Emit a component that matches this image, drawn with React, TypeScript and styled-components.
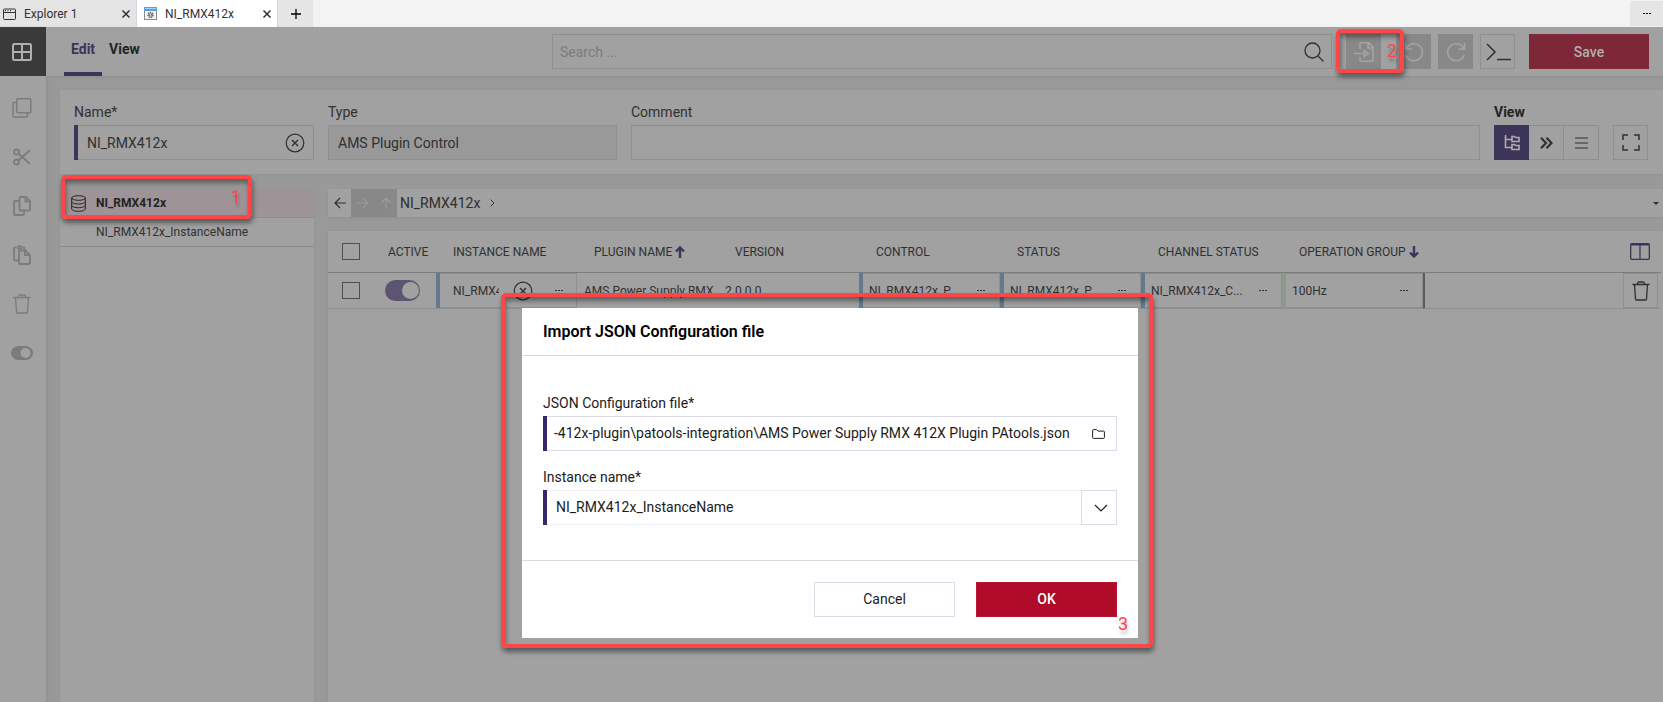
import React, { ReactNode } from "react";
import styled, { createGlobalStyle, css } from "styled-components";

const c = {
  panel: "#a1a1a1",
  gap: "#999999",
  line: "#8e8e93",
  text: "#303030",
  strong: "#232323",
  muted: "#7c7c7c",
  disabled: "#888888",
  disabledIcon: "#a4a4a4",
  purple: "#3d3459",
  accent: "#35286a",
  mark: "#ff4545",
};

const Global = createGlobalStyle`
  *, *::before, *::after { box-sizing: border-box; }
  body { margin: 0; background: ${c.gap}; color: ${c.text}; font: 14px/20px Roboto, "Liberation Sans", sans-serif; }
  button, input, select { font: inherit; color: inherit; margin: 0; border-radius: 0; outline: 0; }
  button { padding: 0; background: none; border: 0; cursor: pointer; }
`;

/* ---------- icons ---------- */

const Glyph = styled.svg<{ $w?: number }>`
  display: block;
  flex: none;
  fill: none;
  stroke: currentColor;
  stroke-width: ${(p) => p.$w ?? 1};
`;

type IconProps = { w: number; h?: number; sw?: number; children: ReactNode };
const Icon = ({ w, h = w, sw, children }: IconProps) => (
  <Glyph $w={sw} width={w} height={h} viewBox={`0 0 ${w} ${h}`} aria-hidden="true">
    {children}
  </Glyph>
);

const WindowIcon = () => (
  <Icon w={13} h={12}>
    <rect x=".5" y="1" width="12" height="10.5" rx="1" />
    <path d="M.5 4.5h12" />
    <path d="M2 2.7h1M4.500 2.700h1M7 2.700h1" strokeWidth="1.200" />
  </Icon>
);
const PluginIcon = () => (
  <Icon w={13} h={13}>
    <rect x=".5" y=".5" width="12" height="12" fill="#f4f4f4" stroke="#8a8a8a" />
    <path d="M0 2h13" stroke="#5aa0dc" strokeWidth="4" />
    <path d="M1 1.500h11" stroke="#a9cdec" />
    <circle cx="6.500" cy="8" r="2.400" stroke="#666" strokeWidth="1.600" strokeDasharray="1.300 .6" />
    <circle cx="6.500" cy="8" r="1.200" stroke="#777" />
  </Icon>
);
const CloseIcon = () => (
  <Icon w={8} sw={1.5}>
    <path d="M.5.5l7 7M7.500.5l-7 7" />
  </Icon>
);
const PlusIcon = () => (
  <Icon w={10} sw={1.3}>
    <path d="M5 0v10M0 5h10" />
  </Icon>
);
const DotsIcon = () => (
  <Icon w={8} h={1}>
    <path d="M0 .5h2M3 .5h2M6 .5h2" />
  </Icon>
);
const GridIcon = () => (
  <Icon w={20} h={18} sw={2}>
    <rect x="1" y="1" width="18" height="16" rx="1.500" />
    <path d="M10 1v16M1 9h18" />
  </Icon>
);
const LayersIcon = () => (
  <Icon w={20} sw={1.5}>
    <rect x="4.750" y=".75" width="14" height="14" rx="1" />
    <path d="M4.500 4.500H2a1 1 0 0 0-1 1V18a1 1 0 0 0 1 1h12.500a1 1 0 0 0 1-1v-3" />
  </Icon>
);
const CutIcon = () => (
  <Icon w={18} sw={1.8}>
    <circle cx="3.500" cy="4" r="2.500" />
    <circle cx="3.500" cy="14" r="2.500" />
    <path d="M5.500 5.500L17 16M5.500 12.500L17 2" />
  </Icon>
);
const CopyIcon = () => (
  <Icon w={18} h={20} sw={1.8}>
    <path d="M7.500 1h5.500l4 4v8.500a1 1 0 0 1-1 1H7.500a1 1 0 0 1-1-1V2a1 1 0 0 1 1-1z" />
    <path d="M12.500 1v4.500H17M6.500 5H2a1 1 0 0 0-1 1v12a1 1 0 0 0 1 1h8a1 1 0 0 0 1-1v-3" />
  </Icon>
);
const PasteIcon = () => (
  <Icon w={18} h={20} sw={1.8}>
    <path d="M7 5.500h5.500l4.500 4.500v8a1 1 0 0 1-1 1H7a1 1 0 0 1-1-1V6.500a1 1 0 0 1 1-1z" />
    <path d="M12 5.500V10h5M6 15.500H2a1 1 0 0 1-1-1V3.500a1 1 0 0 1 1-1h1.500M11.500 5V3.500a1 1 0 0 0-1-1H9.500" />
    <circle cx="6.500" cy="2.500" r="1.600" />
  </Icon>
);
const TrashIcon = () => (
  <Icon w={18} h={20} sw={1.3}>
    <path d="M.5 3.500h17M2.500 3.500l1 14.500a1 1 0 0 0 1 1h9a1 1 0 0 0 1-1l1-14.500M5.500 3.500V2.500a1.500 1.500 0 0 1 1.500-1.500h4a1.500 1.500 0 0 1 1.500 1.500v1" />
  </Icon>
);
const ToggleIcon = () => (
  <Icon w={22} h={14}>
    <rect x=".5" y=".5" width="21" height="13" rx="6.500" fill="currentColor" />
    <circle cx="14.500" cy="7" r="5" fill={c.panel} stroke="none" />
  </Icon>
);
const SearchIcon = () => (
  <Icon w={20} sw={1.3}>
    <circle cx="8.500" cy="8.500" r="7.500" />
    <path d="M14 14l5.500 5.500" />
  </Icon>
);
const ImportIcon = () => (
  <Icon w={20} sw={1.6}>
    <path d="M6 7V1.700a1 1 0 0 1 1-1h7.500l4.500 4.500v13a1 1 0 0 1-1 1H7a1 1 0 0 1-1-1V15M14 1v5h5M0 11.500h10" />
    <path d="M10 8.500l4.500 3-4.500 3z" />
  </Icon>
);
const UndoIcon = () => (
  <Icon w={20} sw={1.6}>
    <path d="M1.500 1v6h6M2 7a8.500 8.500 0 1 1-.2 6" />
  </Icon>
);
const RedoIcon = () => (
  <Icon w={20} sw={1.6}>
    <path d="M18.500 1v6h-6M18 7a8.500 8.500 0 1 0 .2 6" />
  </Icon>
);
const ConsoleIcon = () => (
  <Icon w={26} h={18} sw={1.5}>
    <path d="M2 1l8 8-8 8M12 16.500h14" />
  </Icon>
);
const ClearIcon = () => (
  <Icon w={20} sw={1.2}>
    <circle cx="10" cy="10" r="8.800" />
    <path d="M7 7l6 6M13 7l-6 6" strokeWidth="1.400" />
  </Icon>
);
const TreeIcon = () => (
  <Icon w={16} sw={1.6}>
    <path d="M1.500 0v12.500H8M1.500 4.500H8" />
    <path d="M8 1.500h2.500l1 1H15v4H8zM8 9.500h2.500l1 1H15v4H8z" />
  </Icon>
);
const ChevronsIcon = () => (
  <Icon w={13} h={12} sw={2.2}>
    <path d="M1 .8L6 6l-5 5.200M6.500.8L11.500 6l-5 5.200" />
  </Icon>
);
const LinesIcon = () => (
  <Icon w={13} h={12} sw={1.2}>
    <path d="M0 1h13M0 6h13M0 11h13" />
  </Icon>
);
const ExpandIcon = () => (
  <Icon w={18} h={17} sw={1.5}>
    <path d="M1 6V1h5M12 1h5v5M17 11v5h-5M6 16H1v-5" />
  </Icon>
);
const DatabaseIcon = () => (
  <Icon w={15} h={17}>
    <ellipse cx="7.500" cy="3" rx="6.800" ry="2.300" />
    <path d="M.7 3v11c0 1.200 3 2.300 6.800 2.300s6.800-1.100 6.800-2.300V3M.7 6.700C.7 7.900 3.700 9 7.500 9s6.800-1.100 6.800-2.300M.7 10.400c0 1.200 3 2.300 6.800 2.300s6.800-1.100 6.800-2.300" />
  </Icon>
);
const ArrowIcon = ({ d }: { d: "left" | "right" | "up" }) => (
  <Icon w={12} sw={1.2}>
    {d === "left" && <path d="M12 6H1M6 1L1 6l5 5" />}
    {d === "right" && <path d="M0 6h11M6 1l5 5-5 5" />}
    {d === "up" && <path d="M6 12V1M1 6l5-5 5 5" />}
  </Icon>
);
const CrumbIcon = () => (
  <Icon w={5} h={8}>
    <path d="M.7.7L4 4 .7 7.300" />
  </Icon>
);
const CaretIcon = () => (
  <Icon w={6} h={3}>
    <path d="M0 0h6L3 3z" fill="currentColor" stroke="none" />
  </Icon>
);
const SortIcon = ({ down }: { down?: boolean }) => (
  <Icon w={10} h={12} sw={2.4}>
    {down ? <path d="M5 0v10.500M1 6.500l4 4 4-4" /> : <path d="M5 12V1.500M1 5.500l4-4 4 4" />}
  </Icon>
);
const ColumnsIcon = () => (
  <Icon w={20} h={17} sw={1.3}>
    <rect x=".7" y=".7" width="18.600" height="15.600" rx="1" />
    <path d="M10 1v15" />
    <path d="M1 1.500h18" strokeWidth="2" />
  </Icon>
);
const FolderIcon = () => (
  <Icon w={13} h={10}>
    <path d="M.6 8.500v-7a.9.9 0 0 1 .9-.9h3l1.500 1.500h5.500a.9.9 0 0 1 .9.900v5.500a.9.9 0 0 1-.9.900h-10a.9.9 0 0 1-.9-.9z" />
  </Icon>
);
const ChevronDownIcon = () => (
  <Icon w={14} h={8} sw={1.2}>
    <path d="M1 1l6 6 6-6" />
  </Icon>
);

/* ---------- frame ---------- */

const Page = styled.div`
  position: relative;
  display: flex;
  flex-direction: column;
  min-height: 100vh;
`;
const TabStrip = styled.div`
  display: flex;
  height: 27px;
  background: #f3f3f3;
  color: #333;
  font-size: 12px;
`;
const Tab = styled.div<{ $active?: boolean }>`
  display: flex;
  align-items: center;
  gap: 8px;
  width: ${(p) => (p.$active ? 141 : 137)}px;
  padding: 0 6px 0 ${(p) => (p.$active ? 7 : 3)}px;
  background: ${(p) => (p.$active ? "#fff" : "#e4e4e4")};
  border-right: 1px solid #d5d5e2;
`;
const TabTitle = styled.span`
  flex: 1;
`;
const SmallButton = styled.button<{ $w: number }>`
  display: grid;
  place-items: center;
  width: ${(p) => p.$w}px;
`;
const StripButton = styled(SmallButton)<{ $end?: boolean }>`
  background: #e5e5e5;
  color: #000;
  ${(p) => p.$end && css`margin: 1px 0 1px auto;`}
`;
const Body = styled.div`
  flex: 1;
  display: grid;
  grid-template-columns: 46px minmax(0, 1fr);
`;
const Rail = styled.aside`
  background: ${c.panel};
  box-shadow: 1px 0 3px rgba(0, 0, 0, 0.08);
`;
const RailButton = styled.button<{ $home?: boolean }>`
  display: grid;
  place-items: center;
  width: 100%;
  height: 49px;
  padding-right: 2px;
  color: ${c.muted};
  ${(p) =>
    p.$home &&
    css`
      margin-bottom: 7px;
      background: #3a3a3a;
      color: #b0b0b0;
    `}
`;
const Workspace = styled.main`
  display: flex;
  flex-direction: column;
`;
const Toolbar = styled.header`
  display: flex;
  align-items: center;
  height: 49px;
  padding-right: 14px;
  background: ${c.panel};
  box-shadow: 0 1px 3px rgba(0, 0, 0, 0.08);
`;
const Nav = styled.nav`
  display: flex;
  flex: 0 1 506px;
  align-self: stretch;
  padding-left: 18px;
`;
const NavLink = styled.a<{ $active?: boolean }>`
  padding: 12px 7px 0;
  border-bottom: 4px solid ${(p) => (p.$active ? c.purple : "transparent")};
  color: ${(p) => (p.$active ? c.purple : c.strong)};
  font-weight: 700;
  text-decoration: none;
`;
const SearchBox = styled.label`
  display: flex;
  align-items: center;
  flex: 1;
  height: 35px;
  padding: 0 7px;
  border: 1px solid ${c.line};
`;
const PlainInput = styled.input`
  flex: 1;
  width: 100%;
  min-width: 0;
  padding: 0;
  border: 0;
  background: none;
  &::placeholder { color: ${c.muted}; opacity: 1; }
`;
const Actions = styled.div`
  display: flex;
  gap: 7px;
  margin-left: 14px;
`;
const SquareButton = styled.button<{ $look?: "off" | "on" }>`
  display: grid;
  place-items: center;
  width: 35px;
  height: 35px;
  border: 1px solid ${c.line};
  ${(p) => p.$look === "off" && css`border-color: ${c.disabled}; background: ${c.disabled}; color: ${c.disabledIcon};`}
  ${(p) => p.$look === "on" && css`border-color: ${c.purple}; background: ${c.purple}; color: #adadad;`}
`;
const ImportSlot = styled.div`
  position: relative;
  margin-right: 8px;
`;
const SaveButton = styled.button`
  width: 120px;
  height: 35px;
  margin-left: 7px;
  background: #7d2738;
  color: #b0b0b0;
  font-weight: 500;
`;

/* ---------- form row ---------- */

const Content = styled.div`
  flex: 1;
  display: flex;
  flex-direction: column;
  gap: 15px;
  padding: 14px 0 0 14px;
`;
const panel = css`
  background: ${c.panel};
  box-shadow: 0 1px 3px rgba(0, 0, 0, 0.06);
`;
const FormPanel = styled.section`
  ${panel}
  display: flex;
  gap: 14px;
  padding: 12px 14px 14px;
`;
const Field = styled.div<{ $w?: number }>`
  display: flex;
  flex-direction: column;
  gap: 3px;
  flex: ${(p) => (p.$w ? `0 0 ${p.$w}px` : "1")};
`;
const Caption = styled.label`
  line-height: 20px;
`;
const ViewCaption = styled.span`
  color: ${c.strong};
  font-weight: 700;
`;
/* Coloured square-ended bar on the left of a box, in place of its left border. */
const bar = (color: string) => css`
  margin-left: 4px;
  border-left: 0;
  box-shadow: -4px 0 0 ${color};
`;
const Control = styled.div<{ $required?: boolean; $readOnly?: boolean }>`
  display: flex;
  align-items: center;
  height: 35px;
  padding: 0 8px 0 9px;
  border: 1px solid ${c.line};
  ${(p) => p.$required && bar(c.purple)}
  ${(p) => p.$readOnly && css`background: #999999;`}
`;
const Segments = styled.div`
  display: flex;
  & > button + button { border-left: 0; }
`;
const ViewTools = styled.div`
  display: flex;
  gap: 14px;
`;

/* ---------- tree ---------- */

const Lower = styled.div`
  flex: 1;
  display: grid;
  grid-template-columns: 254px minmax(0, 1fr);
  gap: 14px;
`;
const Tree = styled.ul`
  ${panel}
  position: relative;
  margin: 0;
  padding: 0;
  list-style: none;
  font-size: 12px;
`;
const TreeRow = styled.li<{ $selected?: boolean }>`
  display: flex;
  align-items: center;
  height: 29px;
  padding-left: 11px;
  border-bottom: 1px solid #8c8c8c;
  ${(p) => p.$selected && css`background: #9e9396; border-color: #95898c; color: ${c.strong}; font-weight: 700;`}
`;
const TreeIconSlot = styled.span`
  width: 25px;
`;

/* ---------- breadcrumb and table ---------- */

const Right = styled.div`
  display: flex;
  flex-direction: column;
  gap: 14px;
`;
const Crumbs = styled.div`
  ${panel}
  display: flex;
  align-items: center;
  height: 28px;
  padding-right: 4px;
`;
const CrumbButton = styled.button<{ $off?: boolean }>`
  display: grid;
  place-items: center;
  width: 23px;
  height: 28px;
  ${(p) => p.$off && css`background: ${c.disabled}; color: #9b9b9b;`}
`;
const CrumbText = styled.span`
  margin: 0 10px 0 3px;
`;
const CaretButton = styled.button`
  margin-left: auto;
`;
const TablePanel = styled.section`
  ${panel}
  flex: 1;
  padding-right: 2px;
`;
const Table = styled.table`
  width: 100%;
  table-layout: fixed;
  border-collapse: separate;
  border-spacing: 0;
  font-size: 12px;
`;
const Col = styled.col<{ $w?: number }>`
  width: ${(p) => (p.$w ? `${p.$w}px` : "auto")};
`;
const Th = styled.th<{ $pad?: number }>`
  height: 42px;
  padding: 0 0 0 ${(p) => p.$pad ?? 17}px;
  border-bottom: 1px solid #7c7c7c;
  font-weight: 400;
  text-align: left;
  white-space: nowrap;
`;
const HeadLabel = styled.span`
  display: flex;
  align-items: center;
  gap: 3px;
`;
const HeadTool = styled.button`
  display: block;
  margin-left: 7px;
  color: ${c.purple};
`;
const SortMark = styled.span`
  color: ${c.purple};
`;
const Td = styled.td<{ $pad?: number }>`
  height: 36px;
  padding: 0 0 0 ${(p) => p.$pad ?? 0}px;
  border-bottom: 1px solid ${c.line};
  white-space: nowrap;
  overflow: hidden;
`;
const EndTd = styled(Td)`
  border-left: 2px solid #5c5c5c;
`;
const CellBox = styled.div<{ $bar: string }>`
  display: flex;
  align-items: center;
  gap: 8px;
  height: 35px;
  padding: 0 14px 0 6px;
  border: 1px solid ${c.line};
  ${(p) => bar(p.$bar)}
`;
const NameBox = styled(CellBox)`
  gap: 14px;
  padding: 0 6px 0 13px;
`;
const Check = styled.input`
  appearance: none;
  display: block;
  width: 18px;
  height: 17px;
  border: 1px solid #4e4e4e;
`;
const Switch = styled.input`
  appearance: none;
  display: block;
  width: 35px;
  height: 21px;
  border-radius: 11px;
  background: #5c5470;
  &::after {
    content: "";
    display: block;
    width: 17px;
    height: 17px;
    margin: 2px 0 0 17px;
    border-radius: 50%;
    background: ${c.panel};
  }
`;
const DeleteButton = styled.button`
  display: grid;
  place-items: center;
  width: 35px;
  height: 35px;
  border: 1px solid ${c.line};
`;

/* ---------- dialog ---------- */

const DialogLayer = styled.div`
  position: absolute;
  inset: 0;
  display: flex;
  justify-content: center;
  align-items: flex-start;
  padding: 308px 3px 0 0;
`;
const Dialog = styled.div`
  position: relative;
  width: 616px;
  background: #fff;
  color: #1c1c1c;
`;
const DialogTitle = styled.h2`
  margin: 0;
  padding: 14px 21px 13px;
  border-bottom: 1px solid #d9d9dc;
  color: #000;
  font-size: 16px;
  line-height: 20px;
  font-weight: 600;
`;
const DialogBody = styled.div`
  display: flex;
  flex-direction: column;
  gap: 16px;
  padding: 37px 21px 35px;
`;
const DialogFooter = styled.div`
  display: flex;
  justify-content: flex-end;
  gap: 21px;
  padding: 21px;
  border-top: 1px solid #d9d9dc;
`;
const DialogButton = styled.button<{ $primary?: boolean }>`
  width: 141px;
  height: 35px;
  padding-bottom: 2px;
  border: 1px solid ${(p) => (p.$primary ? "#b41732" : "#dcdae6")};
  background: ${(p) => (p.$primary ? "#af0a28" : "#fff")};
  color: ${(p) => (p.$primary ? "#fff" : "#1c1c1c")};
  font-weight: ${(p) => (p.$primary ? 500 : 400)};
`;
const FileControl = styled(Control)`
  gap: 14px;
  padding: 0 11px 0 7px;
  border-color: #dcdae6;
  ${bar(c.accent)}
  & input { padding-bottom: 2px; }
`;
const SelectControl = styled.div`
  display: grid;
  grid-template-columns: minmax(0, 1fr) 35px;
  height: 35px;
  border: 1px solid #eeeef2;
  ${bar(c.accent)}
`;
const Select = styled.select`
  grid-area: 1 / 1 / 2 / 3;
  appearance: none;
  padding: 0 44px 2px 9px;
  border: 0;
  background: none;
`;
const SelectArrow = styled.span`
  grid-area: 1 / 2;
  display: grid;
  place-items: center;
  margin: -1px -1px -1px 0;
  border: 1px solid #dcdae6;
  padding-left: 3px;
  pointer-events: none;
`;

/* ---------- numbered step markers ---------- */

const Marker = styled.div<{ $at: string; $num: string }>`
  position: absolute;
  inset: ${(p) => p.$at};
  z-index: 2;
  display: flex;
  justify-content: flex-end;
  align-items: flex-end;
  padding: ${(p) => p.$num};
  border: 4px solid ${c.mark};
  border-radius: 5px;
  color: ${c.mark};
  font: 400 18px/20px Roboto, "Liberation Sans", sans-serif;
  text-shadow: 1px 4px 3px rgba(0, 0, 0, 0.25);
  box-shadow: 1px 4px 5px rgba(0, 0, 0, 0.45), inset 1px 4px 5px rgba(0, 0, 0, 0.4);
  pointer-events: none;
`;

const railItems = [
  ["Duplicate", <LayersIcon />],
  ["Cut", <CutIcon />],
  ["Copy", <CopyIcon />],
  ["Paste", <PasteIcon />],
  ["Delete", <TrashIcon />],
  ["Toggle active", <ToggleIcon />],
] as const;

const linkedCells = [
  ["Control", "NI_RMX412x_P...", "#64798f"],
  ["Status", "NI_RMX412x_P...", "#64798f"],
  ["Channel status", "NI_RMX412x_C...", "#64798f"],
  ["Operation group", "100Hz", "#8c9a8c"],
] as const;

export default function App() {
  return (
    <Page>
      <Global />
      <TabStrip>
        <Tab>
          <WindowIcon />
          <TabTitle>Explorer 1</TabTitle>
          <SmallButton $w={8} aria-label="Close Explorer 1"><CloseIcon /></SmallButton>
        </Tab>
        <Tab $active>
          <PluginIcon />
          <TabTitle>NI_RMX412x</TabTitle>
          <SmallButton $w={8} aria-label="Close NI_RMX412x"><CloseIcon /></SmallButton>
        </Tab>
        <StripButton $w={35} aria-label="New tab"><PlusIcon /></StripButton>
        <StripButton $w={33} $end aria-label="More"><DotsIcon /></StripButton>
      </TabStrip>

      <Body>
        <Rail>
          <RailButton $home aria-label="Home"><GridIcon /></RailButton>
          {railItems.map(([name, icon]) => (
            <RailButton key={name} aria-label={name}>{icon}</RailButton>
          ))}
        </Rail>

        <Workspace>
          <Toolbar>
            <Nav>
              <NavLink href="#edit" $active>Edit</NavLink>
              <NavLink href="#view">View</NavLink>
            </Nav>
            <SearchBox>
              <PlainInput placeholder="Search ..." aria-label="Search" />
              <SearchIcon />
            </SearchBox>
            <Actions>
              <ImportSlot>
                <SquareButton $look="off" aria-label="Import"><ImportIcon /></SquareButton>
                <Marker $at="-5px -23px -4px -10px" $num="0 3px 8px 0">2</Marker>
              </ImportSlot>
              <SquareButton $look="off" aria-label="Undo"><UndoIcon /></SquareButton>
              <SquareButton $look="off" aria-label="Redo"><RedoIcon /></SquareButton>
              <SquareButton aria-label="Console"><ConsoleIcon /></SquareButton>
              <SaveButton>Save</SaveButton>
            </Actions>
          </Toolbar>

          <Content>
            <FormPanel>
              <Field $w={240}>
                <Caption htmlFor="name">Name*</Caption>
                <Control $required>
                  <PlainInput id="name" defaultValue="NI_RMX412x" />
                  <SmallButton $w={20} aria-label="Clear name"><ClearIcon /></SmallButton>
                </Control>
              </Field>
              <Field $w={289}>
                <Caption htmlFor="type">Type</Caption>
                <Control $readOnly>
                  <PlainInput id="type" readOnly value="AMS Plugin Control" />
                </Control>
              </Field>
              <Field>
                <Caption htmlFor="comment">Comment</Caption>
                <Control>
                  <PlainInput id="comment" />
                </Control>
              </Field>
              <Field $w={155}>
                <ViewCaption>View</ViewCaption>
                <ViewTools>
                  <Segments>
                    <SquareButton $look="on" aria-label="Tree view"><TreeIcon /></SquareButton>
                    <SquareButton aria-label="Breadcrumb view"><ChevronsIcon /></SquareButton>
                    <SquareButton aria-label="List view"><LinesIcon /></SquareButton>
                  </Segments>
                  <SquareButton aria-label="Full screen"><ExpandIcon /></SquareButton>
                </ViewTools>
              </Field>
            </FormPanel>

            <Lower>
              <Tree>
                <TreeRow $selected>
                  <TreeIconSlot><DatabaseIcon /></TreeIconSlot>
                  NI_RMX412x
                  <Marker as="span" $at="-14px 62px auto 1px" $num="8px 7px 8px">1</Marker>
                </TreeRow>
                <TreeRow>
                  <TreeIconSlot />
                  NI_RMX412x_InstanceName
                </TreeRow>
              </Tree>

              <Right>
                <Crumbs>
                  <CrumbButton aria-label="Back"><ArrowIcon d="left" /></CrumbButton>
                  <CrumbButton $off aria-label="Forward"><ArrowIcon d="right" /></CrumbButton>
                  <CrumbButton $off aria-label="Up"><ArrowIcon d="up" /></CrumbButton>
                  <CrumbText>NI_RMX412x</CrumbText>
                  <CrumbIcon />
                  <CaretButton aria-label="History"><CaretIcon /></CaretButton>
                </Crumbs>

                <TablePanel>
                  <Table>
                    <colgroup>
                      <Col $w={46} />
                      <Col $w={62} />
                      <Col $w={141} />
                      <Col $w={141} />
                      <Col $w={141} />
                      <Col $w={141} />
                      <Col $w={141} />
                      <Col $w={141} />
                      <Col $w={141} />
                      <Col />
                      <Col $w={38} />
                    </colgroup>
                    <thead>
                      <tr>
                        <Th $pad={14}><Check type="checkbox" aria-label="Select all" /></Th>
                        <Th $pad={14}>ACTIVE</Th>
                        <Th>INSTANCE NAME</Th>
                        <Th>
                          <HeadLabel>PLUGIN NAME<SortMark><SortIcon /></SortMark></HeadLabel>
                        </Th>
                        <Th>VERSION</Th>
                        <Th>CONTROL</Th>
                        <Th>STATUS</Th>
                        <Th>CHANNEL STATUS</Th>
                        <Th>
                          <HeadLabel>OPERATION GROUP<SortMark><SortIcon down /></SortMark></HeadLabel>
                        </Th>
                        <Th />
                        <Th $pad={0}>
                          <HeadTool aria-label="Columns"><ColumnsIcon /></HeadTool>
                        </Th>
                      </tr>
                    </thead>
                    <tbody>
                      <tr>
                        <Td $pad={14}><Check type="checkbox" aria-label="Select row" /></Td>
                        <Td $pad={11}><Switch type="checkbox" role="switch" defaultChecked aria-label="Active" /></Td>
                        <Td>
                          <NameBox $bar="#64798f">
                            <PlainInput defaultValue="NI_RMX412x_InstanceName" aria-label="Instance name" />
                            <SmallButton $w={20} aria-label="Clear instance name"><ClearIcon /></SmallButton>
                            <SmallButton $w={23} aria-label="More"><DotsIcon /></SmallButton>
                          </NameBox>
                        </Td>
                        <Td $pad={7}>AMS Power Supply RMX</Td>
                        <Td $pad={7}>2.0.0.0</Td>
                        {linkedCells.map(([name, value, color]) => (
                          <Td key={name}>
                            <CellBox $bar={color}>
                              <PlainInput defaultValue={value} aria-label={name} />
                              <SmallButton $w={8} aria-label={`Choose ${name}`}><DotsIcon /></SmallButton>
                            </CellBox>
                          </Td>
                        ))}
                        <EndTd />
                        <Td>
                          <DeleteButton aria-label="Delete row"><TrashIcon /></DeleteButton>
                        </Td>
                      </tr>
                    </tbody>
                  </Table>
                </TablePanel>
              </Right>
            </Lower>
          </Content>
        </Workspace>
      </Body>

      <DialogLayer>
        <Dialog role="dialog" aria-labelledby="dialog-title">
          <DialogTitle id="dialog-title">Import JSON Configuration file</DialogTitle>
          <DialogBody>
            <Field>
              <Caption htmlFor="file">JSON Configuration file*</Caption>
              <FileControl>
                <PlainInput
                  id="file"
                  defaultValue={"-412x-plugin\\patools-integration\\AMS Power Supply RMX 412X Plugin PAtools.json"}
                />
                <SmallButton $w={13} aria-label="Browse"><FolderIcon /></SmallButton>
              </FileControl>
            </Field>
            <Field>
              <Caption htmlFor="instance">Instance name*</Caption>
              <SelectControl>
                <Select id="instance" defaultValue="NI_RMX412x_InstanceName">
                  <option>NI_RMX412x_InstanceName</option>
                </Select>
                <SelectArrow><ChevronDownIcon /></SelectArrow>
              </SelectControl>
            </Field>
          </DialogBody>
          <DialogFooter>
            <DialogButton>Cancel</DialogButton>
            <DialogButton $primary>OK</DialogButton>
          </DialogFooter>
          <Marker $at="-15px -15px -10px -21px" $num="0 21px 10px 0">3</Marker>
        </Dialog>
      </DialogLayer>
    </Page>
  );
}
